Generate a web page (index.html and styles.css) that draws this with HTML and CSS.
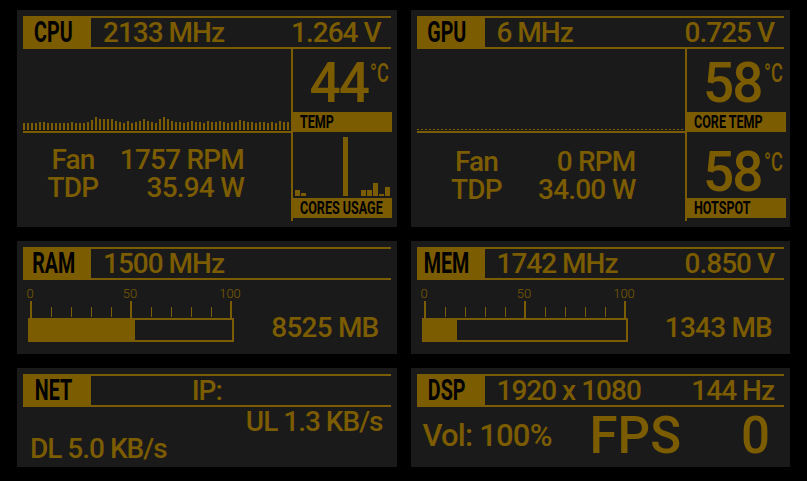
FILE: index.html
```html
<!DOCTYPE html>
<html lang="en">
<head>
  <meta charset="UTF-8">
  <meta name="viewport" content="width=device-width, initial-scale=1.0">
  <title>Sensor Panel</title>
  <link rel="stylesheet" href="styles.css">
</head>
<body>
  <div class="board">

    <!-- CPU -->
    <section class="panel">
      <div class="head">
        <div class="tag"><span>CPU</span></div>
        <div class="head-vals"><span>2133 MHz</span><span>1.264 V</span></div>
      </div>
      <div class="split">
        <div class="main">
          <div class="graph">
            <svg width="268" height="20" viewBox="0 0 268 20">
              <path class="graph-bars" d="M1 20v-7m4 7v-7m4 7v-7m4 7v-7m4 7v-8m4 8v-8m4 8v-7m4 7v-7m4 7v-7m4 7v-7m4 7v-7m4 7v-7m4 7v-8m4 8v-7m4 7v-7m4 7v-7m4 7v-8m4 8v-10m4 10v-13m4 13v-11m4 11v-11m4 11v-11m4 11v-11m4 11v-9m4 9v-8m4 8v-7m4 7v-9m4 9v-7m4 7v-8m4 8v-9m4 9v-11m4 11v-9m4 9v-8m4 8v-7m4 7v-11m4 11v-13m4 13v-11m4 11v-9m4 9v-8m4 8v-8m4 8v-7m4 7v-8m4 8v-9m4 9v-8m4 8v-8m4 8v-7m4 7v-9m4 9v-8m4 8v-8m4 8v-9m4 9v-8m4 8v-7m4 7v-8m4 8v-8m4 8v-10m4 10v-9m4 9v-8m4 8v-8m4 8v-7m4 7v-8m4 8v-8m4 8v-7m4 7v-8m4 8v-7m4 7v-9m4 9v-8m4 8v-8"/>
            </svg>
          </div>
          <div class="stats">
            <span class="k">Fan</span><span class="v">1757 RPM</span>
            <span class="k">TDP</span><span class="v">35.94 W</span>
          </div>
        </div>
        <div class="side">
          <div class="temp"><span class="num">44</span><span class="unit">°C</span></div>
          <div class="cap"><span>TEMP</span></div>
          <div class="cores">
            <i style="height:6px"></i><i style="height:3px"></i><i style="height:0"></i><i style="height:0"></i>
            <i style="height:0"></i><i style="height:0"></i><i style="height:0"></i><i style="height:0"></i>
            <i style="height:59px"></i><i style="height:0"></i><i style="height:0"></i><i style="height:6px"></i>
            <i style="height:6px"></i><i style="height:13px"></i><i style="height:2px"></i><i style="height:9px"></i>
          </div>
          <div class="cap"><span>CORES USAGE</span></div>
        </div>
      </div>
    </section>

    <!-- GPU -->
    <section class="panel">
      <div class="head">
        <div class="tag"><span>GPU</span></div>
        <div class="head-vals"><span>6 MHz</span><span>0.725 V</span></div>
      </div>
      <div class="split">
        <div class="main">
          <div class="graph"><div class="graph-flat"></div></div>
          <div class="stats gpu">
            <span class="k">Fan</span><span class="v">0 RPM</span>
            <span class="k">TDP</span><span class="v">34.00 W</span>
          </div>
        </div>
        <div class="side">
          <div class="temp"><span class="num">58</span><span class="unit">°C</span></div>
          <div class="cap"><span>CORE TEMP</span></div>
          <div class="temp hot"><span class="num">58</span><span class="unit">°C</span></div>
          <div class="cap"><span>HOTSPOT</span></div>
        </div>
      </div>
    </section>

    <!-- RAM -->
    <section class="panel">
      <div class="head">
        <div class="tag"><span>RAM</span></div>
        <div class="head-vals"><span>1500 MHz</span></div>
      </div>
      <div class="meter-body">
        <div class="scale">
          <svg width="206" height="32" viewBox="0 0 206 32">
            <text x="2" y="12">0</text><text x="102" y="12">50</text><text x="202" y="12">100</text>
            <path class="major" d="M3 15V32M103 15V32M203 15V32"/>
            <path class="minor" d="M23.5 21V31M43.5 21V31M63.5 21V31M83.5 21V31M123.5 21V31M143.5 21V31M163.5 21V31M183.5 21V31"/>
          </svg>
          <div class="bar"><div style="width:52%"></div></div>
        </div>
        <div class="meter-val">8525 MB</div>
      </div>
    </section>

    <!-- MEM -->
    <section class="panel">
      <div class="head">
        <div class="tag"><span>MEM</span></div>
        <div class="head-vals"><span>1742 MHz</span><span>0.850 V</span></div>
      </div>
      <div class="meter-body">
        <div class="scale">
          <svg width="206" height="32" viewBox="0 0 206 32">
            <text x="2" y="12">0</text><text x="102" y="12">50</text><text x="202" y="12">100</text>
            <path class="major" d="M3 15V32M103 15V32M203 15V32"/>
            <path class="minor" d="M23.5 21V31M43.5 21V31M63.5 21V31M83.5 21V31M123.5 21V31M143.5 21V31M163.5 21V31M183.5 21V31"/>
          </svg>
          <div class="bar"><div style="width:16.5%"></div></div>
        </div>
        <div class="meter-val">1343 MB</div>
      </div>
    </section>

    <!-- NET -->
    <section class="panel">
      <div class="head">
        <div class="tag"><span>NET</span></div>
        <div class="head-vals ip"><span>IP:</span></div>
      </div>
      <div class="net-body">
        <div class="ul">UL 1.3 KB/s</div>
        <div class="dl">DL 5.0 KB/s</div>
      </div>
    </section>

    <!-- DSP -->
    <section class="panel">
      <div class="head">
        <div class="tag"><span>DSP</span></div>
        <div class="head-vals"><span>1920 x 1080</span><span>144 Hz</span></div>
      </div>
      <div class="dsp-body">
        <div class="vol">Vol: 100%</div>
        <div class="fps">FPS</div>
        <div class="fps-val">0</div>
      </div>
    </section>

  </div>
</body>
</html>
```

FILE: styles.css
```css
body {
  margin: 0;
  background: #000;
  color: #7c5c00;
  font-family: Roboto, "Liberation Sans", sans-serif;
  font-weight: 500;
}
.board {
  display: grid;
  grid-template-columns: 1fr 1fr;
  grid-template-rows: 217px 113px 99px;
  column-gap: 14px;
  row-gap: 14px;
  padding: 10px 17px 0;
}
.panel {
  background: #1a1a1a;
  padding: 6px;
  display: flex;
  flex-direction: column;
  min-width: 0;
}

/* header strip */
.head {
  display: flex;
  height: 33px;
  box-sizing: border-box;
  border-top: 2px solid #7c5c00;
  border-bottom: 2px solid #7c5c00;
  flex: none;
}
.tag {
  width: 68px;
  box-sizing: border-box;
  padding-right: 7px;
  background: #7c5c00;
  color: #000;
  display: flex;
  align-items: center;
  justify-content: center;
  font-size: 29px;
  font-weight: 700;
}
.tag span {
  display: inline-block;
  line-height: 1;
  transform: scaleX(.68);
}
.head-vals {
  flex: 1;
  display: flex;
  justify-content: space-between;
  align-items: center;
  padding: 0 10px 0 12px;
  font-size: 28px;
  line-height: 1;
  letter-spacing: -1px;
  white-space: nowrap;
}
.head-vals.ip {
  justify-content: center;
  padding-right: 80px;
}

/* cpu / gpu */
.split {
  flex: 1;
  display: flex;
}
.main {
  flex: 1;
  display: flex;
  flex-direction: column;
}
.graph {
  height: 84px;
  box-sizing: border-box;
  border-bottom: 2px solid #7c5c00;
  padding-bottom: 1px;
  display: flex;
  align-items: flex-end;
}
.graph svg {
  display: block;
}
.graph-bars {
  stroke: #7c5c00;
  stroke-width: 2;
  fill: none;
}
.graph-flat {
  width: 268px;
  height: 1px;
  background: repeating-linear-gradient(90deg, #7c5c00 0 2px, transparent 2px 4px);
}
.stats {
  display: grid;
  grid-template-columns: 80px 131px;
  padding: 13px 0 0 10px;
  font-size: 28px;
  line-height: 28px;
  letter-spacing: -0.8px;
  white-space: nowrap;
}
.stats.gpu {
  padding-top: 15px;
  grid-template-columns: 100px 109px;
}
.stats .k {
  text-align: center;
}
.stats .v {
  text-align: right;
}
.side {
  width: 99px;
  border-left: 2px solid #7c5c00;
  display: flex;
  flex-direction: column;
}
.temp {
  height: 63px;
  box-sizing: border-box;
  padding: 7px 3px 0 0;
  display: flex;
  justify-content: flex-end;
  align-items: flex-start;
}
.temp.hot {
  height: 66px;
  padding-top: 13px;
}
.temp .num {
  font-size: 55px;
  line-height: 1;
  letter-spacing: -2px;
}
.temp .unit {
  display: inline-block;
  font-size: 26px;
  line-height: 1;
  margin: 4px 0 0 -6px;
  transform: scaleX(.7);
  transform-origin: right;
}
.cap {
  height: 20px;
  background: #7c5c00;
  color: #000;
  font-size: 19px;
  font-weight: 700;
  line-height: 20px;
  padding-left: 7px;
  white-space: nowrap;
}
.cap span {
  display: inline-block;
  transform: scaleX(.66);
  transform-origin: left;
}
.cores {
  height: 66px;
  box-sizing: border-box;
  padding: 0 0 2px 2px;
  display: flex;
  align-items: flex-end;
  gap: 1px;
}
.cores i {
  width: 5px;
  flex: none;
  background: #7c5c00;
}

/* ram / mem */
.meter-body {
  display: flex;
  align-items: flex-end;
  padding-top: 6px;
}
.scale {
  width: 206px;
  margin-left: 5px;
}
.scale svg {
  display: block;
  overflow: visible;
}
.scale text {
  fill: #7c5c00;
  font-size: 13px;
  font-weight: 300;
  text-anchor: middle;
}
.scale .major {
  stroke: #7c5c00;
  stroke-width: 2;
}
.scale .minor {
  stroke: #7c5c00;
  stroke-width: 1;
}
.bar {
  height: 24px;
  box-sizing: border-box;
  border: 2px solid #7c5c00;
}
.bar div {
  height: 100%;
  background: #7c5c00;
}
.meter-val {
  flex: 1;
  text-align: right;
  padding-right: 12px;
  font-size: 28px;
  line-height: 28px;
  letter-spacing: -0.8px;
  white-space: nowrap;
}

/* net */
.net-body {
  padding-top: 1px;
  font-size: 28px;
  line-height: 27px;
  letter-spacing: -1px;
  white-space: nowrap;
}
.net-body .ul {
  text-align: right;
  padding-right: 8px;
}
.net-body .dl {
  padding-left: 7px;
}

/* dsp */
.dsp-body {
  flex: 1;
  display: flex;
  align-items: center;
  padding-top: 3px;
  white-space: nowrap;
}
.vol {
  width: 173px;
  box-sizing: border-box;
  padding-left: 6px;
  font-size: 31px;
  letter-spacing: -0.8px;
  line-height: 1;
}
.fps {
  font-size: 51px;
  line-height: 1;
}
.fps-val {
  flex: 1;
  text-align: right;
  padding-right: 14px;
  font-size: 51px;
  line-height: 1;
}
```
